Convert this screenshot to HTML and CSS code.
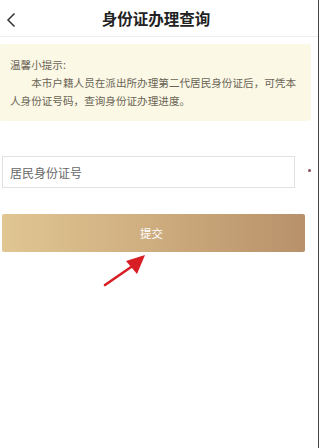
FILE: index.html
```html
<!DOCTYPE html>
<html lang="zh-CN">
<head>
    <meta charset="UTF-8">
    <title>身份证办理查询</title>
    <meta name="viewport" content="width=device-width, initial-scale=1.0">
    <link rel="stylesheet" href="styles.css">
</head>
<body>
    <div class="page">
        <div class="header">
            <span class="back">
                <svg width="10" height="16" viewBox="0 0 10 16"><path d="M8.5 1.5 L2 8 L8.5 14.5" fill="none" stroke="#333" stroke-width="1.5"/></svg>
            </span>
            <div class="title">身份证办理查询</div>
        </div>
        <div class="notice">
            <div>温馨小提示:</div>
            <div class="noticeText">本市户籍人员在派出所办理第二代居民身份证后，可凭本人身份证号码，查询身份证办理进度。</div>
        </div>
        <div class="formRow">
            <input class="idInput" type="text" placeholder="居民身份证号">
            <span class="required"></span>
        </div>
        <div class="submitBtn">提交</div>
        <div class="arrowWrap">
            <svg width="60" height="40" viewBox="0 0 60 40">
                <line x1="5" y1="33" x2="34" y2="13" stroke="#d81e25" stroke-width="2.6" stroke-linecap="round"/>
                <polygon points="45,3 26,9 37,22" fill="#d81e25"/>
            </svg>
        </div>
    </div>
</body>
</html>
```

FILE: styles.css
```css
body {
    margin: 0;
    padding: 0;
    background: #fff;
    font-family: "Noto Sans CJK SC", "Noto Sans", sans-serif;
}
.page {
    width: 319px;
    height: 448px;
    box-sizing: border-box;
    border-right: 1px solid #444;
    position: relative;
}
.header {
    height: 36px;
    border-bottom: 1px solid #eeeef0;
    display: flex;
    align-items: center;
    justify-content: center;
    position: relative;
}
.back {
    position: absolute;
    left: 6px;
    top: 9px;
}
.title {
    font-family: "Noto Sans CJK SC", serif;
    font-size: 15.5px;
    font-weight: bold;
    color: #222;
    margin-left: -6px;
}
.notice {
    margin: 7px 7px 0 0;
    background: #fbf8e6;
    border-radius: 2px;
    padding: 12px 8px 11px 10px;
    font-size: 10.6px;
    line-height: 18px;
    color: #6a6454;
}
.noticeText {
    text-indent: 2em;
}
.formRow {
    margin-top: 35px;
    display: flex;
    align-items: center;
    padding-left: 2px;
}
.idInput {
    width: 293px;
    height: 32px;
    box-sizing: border-box;
    border: 1px solid #e2e2e2;
    padding: 0 7px;
    font-size: 12px;
    font-family: "Noto Sans CJK SC", sans-serif;
    outline: none;
}
.idInput::placeholder {
    color: #666;
}
.required {
    width: 3px;
    height: 3px;
    border-radius: 50%;
    background: #8a4a55;
    margin-left: 13px;
    margin-top: -3px;
}
.submitBtn {
    margin: 26px 13px 0 2px;
    height: 38px;
    background: linear-gradient(to right, #e0c692, #d2b283 40%, #b8916a);
    border-radius: 2px;
    color: #fff;
    font-size: 11.5px;
    display: flex;
    align-items: center;
    justify-content: center;
    padding-right: 4px;
}
.arrowWrap {
    margin: 0 0 0 100px;
    height: 40px;
}
```
